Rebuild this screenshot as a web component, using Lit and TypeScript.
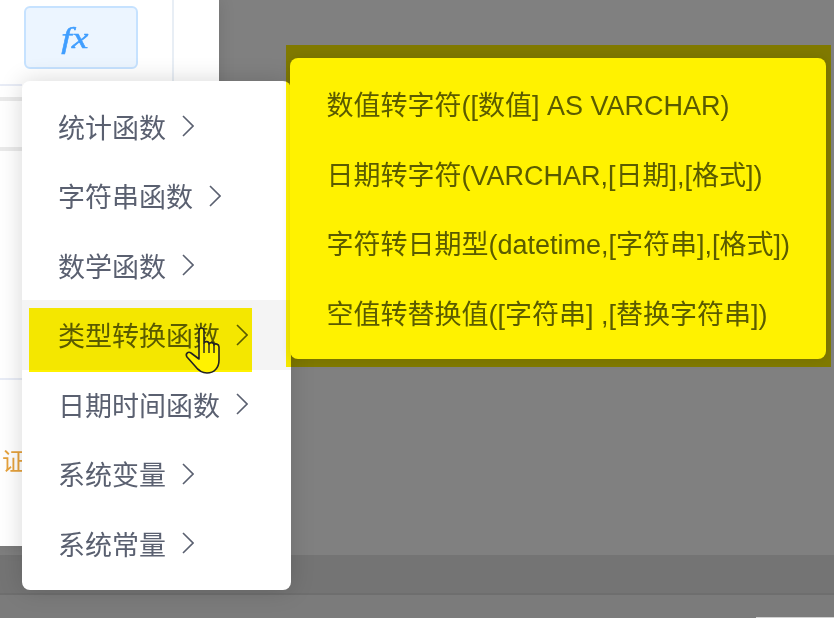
import { css, html, LitElement } from 'lit';
import { customElement } from 'lit/decorators.js';

const MENU = ['统计函数', '字符串函数', '数学函数', '类型转换函数', '日期时间函数', '系统变量', '系统常量'];
const SUBMENU = [
    '数值转字符([数值] AS VARCHAR)',
    '日期转字符(VARCHAR,[日期],[格式])',
    '字符转日期型(datetime,[字符串],[格式])',
    '空值转替换值([字符串] ,[替换字符串])',
];

@customElement('app-root')
export class AppRoot extends LitElement {
    static styles = css`
        :host {
            display: block;
            position: relative;
            width: 834px;
            height: 618px;
            overflow: hidden;
            background: #808080;
            font-family: "Liberation Sans", "Noto Sans CJK SC", sans-serif;
        }
        .footer-band {
            position: absolute;
            left: 0;
            right: 0;
            top: 555px;
            height: 38px;
            background: #747474;
            border-bottom: 2px solid #6e6e6e;
        }
        .footer-rest {
            position: absolute;
            left: 0;
            right: 0;
            top: 595px;
            bottom: 0;
            background: #7b7b7b;
        }
        .corner {
            position: absolute;
            left: 756px;
            top: 617px;
            width: 78px;
            height: 1px;
            background: #d0d0d0;
        }
        .drawer {
            position: absolute;
            left: 0;
            top: 0;
            width: 219px;
            height: 546px;
            background: #fff;
            box-shadow: 0 0 16px rgba(0, 0, 0, 0.12);
        }
        .fx {
            position: absolute;
            left: 24px;
            top: 6px;
            width: 110px;
            height: 59px;
            border: 2px solid #c6e2ff;
            border-radius: 6px;
            background: #ecf5ff;
            color: #409eff;
            font-family: "Liberation Serif", serif;
            font-style: italic;
            font-size: 30px;
            -webkit-text-stroke: 0.5px #409eff;
            display: flex;
            align-items: center;
            justify-content: center;
        }
        .fx span {
            margin-right: 12px;
            transform: scaleX(1.25);
        }
        .vline {
            position: absolute;
            left: 172px;
            top: 0;
            width: 2px;
            height: 84px;
            background: #e8eef5;
        }
        .orange {
            position: absolute;
            left: 2px;
            top: 448px;
            font-size: 24px;
            line-height: 28px;
            color: #e6a23c;
        }
        .hline {
            position: absolute;
            left: 0;
            width: 22px;
            height: 2px;
            background: #e8ecf6;
        }
        .hline.thick {
            height: 4px;
            background: #eaeaea;
        }
        .menu {
            position: absolute;
            left: 22px;
            top: 81px;
            width: 269px;
            height: 509px;
            padding-top: 10.5px;
            box-sizing: border-box;
            background: #fff;
            border-radius: 8px;
            box-shadow: 0 0 24px rgba(0, 0, 0, 0.16);
        }
        .item {
            height: 69.5px;
            display: flex;
            align-items: center;
            padding-left: 36px;
            gap: 16px;
            font-size: 27px;
            color: #5a6070;
        }
        .item.active {
            background: #f4f4f4;
        }
        .panel {
            position: absolute;
            left: 290px;
            top: 58px;
            width: 536px;
            height: 301px;
            box-sizing: border-box;
            padding-top: 11px;
            background: #fff;
            border-radius: 8px;
            box-shadow: 0 0 12px rgba(0, 0, 0, 0.1);
        }
        .panel div {
            height: 69.5px;
            display: flex;
            align-items: center;
            padding-left: 36.5px;
            font-size: 27px;
            color: #5a6070;
            white-space: nowrap;
        }
        .mark {
            position: absolute;
            background: #fff200;
            mix-blend-mode: multiply;
        }
        .mark.panel-mark {
            left: 286px;
            top: 45px;
            width: 545px;
            height: 322px;
        }
        .mark.item-mark {
            left: 29px;
            top: 308px;
            width: 223px;
            height: 64px;
        }
        .cursor {
            position: absolute;
            left: 184px;
            top: 326px;
        }
    `;

    render() {
        return html`
            <div class="footer-band"></div>
            <div class="footer-rest"></div>
            <div class="corner"></div>
            <div class="drawer">
                <div class="fx"><span>fx</span></div>
                <div class="vline"></div>
                <div class="hline" style="top:84px"></div>
                <div class="hline thick" style="top:97px"></div>
                <div class="hline thick" style="top:147px"></div>
                <div class="hline" style="top:378px"></div>
                <div class="orange">证</div>
            </div>
            <div class="menu">
                ${MENU.map((label, i) => html`
                    <div class="item ${i === 3 ? 'active' : ''}">
                        <span>${label}</span>
                        <svg width="12" height="22" viewBox="0 0 12 22" fill="none" stroke="#5a6070" stroke-width="1.6">
                            <path d="M1 1 L11 11 L1 21" />
                        </svg>
                    </div>`)}
            </div>
            <div class="panel">
                ${SUBMENU.map((label) => html`<div>${label}</div>`)}
            </div>
            <div class="mark panel-mark"></div>
            <div class="mark item-mark"></div>
            <svg class="cursor" width="38" height="50" viewBox="0 0 38 50">
                <path d="M15 5 C15 1 20 1 20 5 L20 17 C21 15 25 15 25 18 C26 16 30 16 30 19 C31 17 35 18 35 21 L35 34 C35 42 30 47 23 47 C17 47 14 44 11 40 L3 31 C1 28 4 25 7 27 L15 33 Z"
                    fill="#fff200" stroke="#222" stroke-width="1.6" stroke-linejoin="round" />
                <path d="M20 17 V27 M25 18 V27 M30 19 V27" stroke="#222" stroke-width="1.4" fill="none" />
            </svg>
        `;
    }
}
